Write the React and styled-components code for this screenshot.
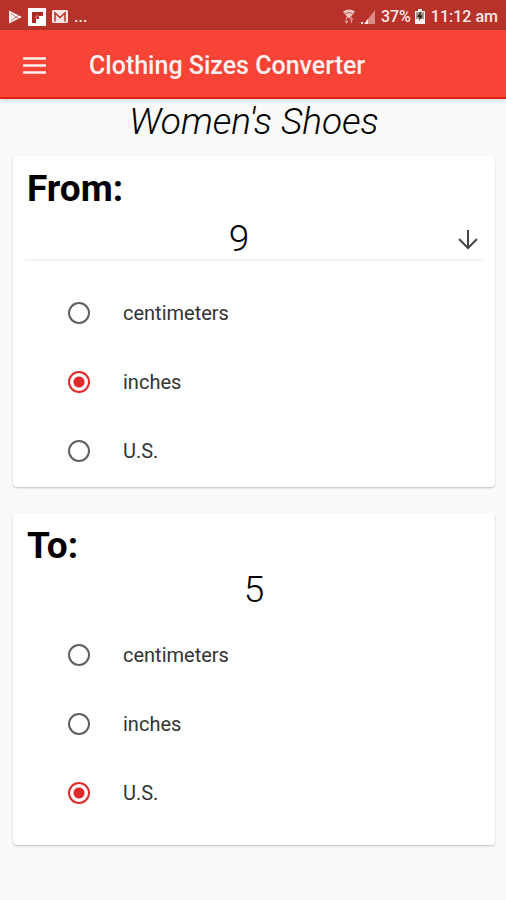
import React, { useState } from 'react'
import styled, { createGlobalStyle } from 'styled-components'

const GlobalStyle = createGlobalStyle`
    * {
        box-sizing: border-box;
    }
    body {
        margin: 0;
        background-color: #fafafa;
        color: #000;
        font-family: Roboto, sans-serif;
    }
`

// Status bar and app bar
const StatusBar = styled.div`
    display: flex;
    justify-content: space-between;
    align-items: center;
    height: 30px;
    padding: 3px 8px 0;
    background-color: #b7322a;
    color: #fde8e6;
    font-size: 16px;
    font-weight: 500;
    line-height: 27px;
`
const StatusGroup = styled.div`
    display: flex;
    align-items: center;
    gap: ${({ $gap }) => $gap}px;
    svg {
        display: block;
    }
`
const AppBar = styled.header`
    display: flex;
    align-items: center;
    gap: 40px;
    height: 69px;
    padding: 4px 20px 0;
    background-color: #f74436;
    border-bottom: 2px solid #df1f16;
    box-shadow: 0 1px 4px rgba(0, 40, 40, 0.22);
`
const MenuButton = styled.button`
    display: flex;
    padding: 3px;
    border: 0;
    background: none;
    color: #fff0ef;
    cursor: pointer;
`
const AppTitle = styled.h1`
    margin: 0;
    color: #fff3f2;
    font-size: 25px;
    font-weight: 500;
    line-height: 32px;
`

// Page content
const Content = styled.main`
    padding: 3px 11px 24px 13px;
`
const Category = styled.h2`
    margin: 0 0 14px;
    font-size: 37px;
    font-style: italic;
    font-weight: 300;
    line-height: 40px;
    text-align: center;
`
const Card = styled.section`
    padding: 13px 12px ${({ $bottom }) => $bottom}px;
    border-radius: 4px;
    background-color: #fff;
    box-shadow: 0 1px 2px rgba(0, 0, 0, 0.24);
    & + & {
        margin-top: 26px;
    }
`
const CardTitle = styled.h3`
    margin: 0;
    padding-left: 2px;
    font-size: 37px;
    font-weight: 700;
    line-height: 40px;
`
const SizeField = styled.label`
    display: flex;
    align-items: center;
    margin: 10px 0 17px;
    border-bottom: 2px solid #f3f3f3;
    svg {
        flex: none;
        margin: 0 3px;
    }
`
const SizeSelect = styled.select`
    flex: 1;
    height: 40px;
    padding: 0;
    border: 0;
    appearance: none;
    background: none;
    color: #000;
    font: 300 37px/40px Roboto, sans-serif;
    text-align-last: center;
`
const Result = styled.output`
    display: block;
    margin: 4px 0 10px;
    font-size: 37px;
    font-weight: 300;
    line-height: 40px;
    text-align: center;
`
const Units = styled.div`
    display: flex;
    flex-direction: column;
    padding-left: 43px;
`
const UnitLabel = styled.label`
    display: flex;
    align-items: center;
    gap: 33px;
    height: 69px;
    color: #333;
    font-size: 20px;
    line-height: 24px;
    cursor: pointer;
`
const Radio = styled.input`
    appearance: none;
    width: 22px;
    height: 22px;
    margin: 0;
    border: 2px solid #5f5f5f;
    border-radius: 50%;
    &:checked {
        border-color: #e02a2a;
        background: radial-gradient(circle, #e02a2a 5px, transparent 6px);
    }
`

const units = ['centimeters', 'inches', 'U.S.']
const sizes = ['5', '6', '7', '8', '9', '10', '11', '12']

function PlayIcon() {
    return (
        <svg width="14" height="14" viewBox="0 0 14 14">
            <path d="M1 0.5 14 7 1 13.5Z" fill="#fff0ef" />
            <path d="M3 3.5 8 7 3 10.5M8 7l3-2M8 7l3 2" fill="none" stroke="#d4766f" strokeWidth="1" />
        </svg>
    )
}

function FlipboardIcon() {
    return (
        <svg width="18" height="18" viewBox="0 0 18 18">
            <path d="M0 0h18v18H0Z" fill="#fff" />
            <path d="M4 4h11v4h-4v3H8v4H4Z" fill="#a82b24" />
            <path d="M8 8h3M8 8v3" stroke="#d98a85" strokeWidth="1" />
        </svg>
    )
}

function MailIcon() {
    return (
        <svg width="16" height="13" viewBox="0 0 16 13">
            <rect width="16" height="13" rx="1.5" fill="#fbe3e1" />
            <path d="M3 11.5V3l5 4.500L13 3v8.500" fill="none" stroke="#b7322a" strokeWidth="1.500" />
        </svg>
    )
}

function WifiIcon() {
    return (
        <svg width="12" height="15" viewBox="0 0 12 15">
            <path d="M0 2.500Q6-1.500 12 2.500L7 9H5Z" fill="#efc5c2" />
            <path d="M2.500 4.500q3.500-2 7 0" fill="none" stroke="#c4554d" strokeWidth="1" />
            <path d="M3.500 8v5M2 12l1.500 2L5 12M8.500 14V9M7 11l1.500-2 1.500 2" fill="none" stroke="#dc938e" strokeWidth="1.200" />
        </svg>
    )
}

function SignalIcon() {
    return (
        <svg width="14" height="14" viewBox="0 0 14 14">
            <path d="M14 0v14H3Z" fill="#dc8a85" />
            <path d="M7 9v5H3Z" fill="#fff0ef" />
            <path d="M0 12h2v2H0Z" fill="#fff0ef" />
        </svg>
    )
}

function BatteryIcon() {
    return (
        <svg width="10" height="15" viewBox="0 0 10 15">
            <path d="M3 0h4v2h3v13H0V2h3Z" fill="#fff0ef" />
            <path d="M1 3h8v7H1Z" fill="#a99a91" />
            <path d="M6 2 2 8h2.500L4 12l4-5.500H5.500Z" fill="#2d211d" />
        </svg>
    )
}

function MenuIcon() {
    return (
        <svg width="23" height="17" viewBox="0 0 23 17">
            <path d="M0 1.500h23M0 8.500h23M0 15.500h23" stroke="currentColor" strokeWidth="2.600" />
        </svg>
    )
}

function ArrowDownIcon() {
    return (
        <svg width="24" height="24" viewBox="0 0 24 24" fill="none" stroke="#444" strokeWidth="2">
            <path d="M12 3v18M3 12l9 9 9-9" />
        </svg>
    )
}

/**
 * Radio list of the available units
 */
function UnitList({ name, value, onChange }) {
    return (
        <Units role="radiogroup" aria-label={name}>
            {units.map((unit) => (
                <UnitLabel key={unit}>
                    <Radio
                        type="radio"
                        name={name}
                        checked={value === unit}
                        onChange={() => onChange(unit)}
                    />
                    {unit}
                </UnitLabel>
            ))}
        </Units>
    )
}

function App() {
    const [size, setSize] = useState('9')
    const [from, setFrom] = useState('inches')
    const [to, setTo] = useState('U.S.')

    return (
        <>
            <GlobalStyle />
            <StatusBar>
                <StatusGroup $gap={6}>
                    <PlayIcon />
                    <FlipboardIcon />
                    <MailIcon />
                    <span>...</span>
                </StatusGroup>
                <StatusGroup $gap={6}>
                    <WifiIcon />
                    <SignalIcon />
                    <StatusGroup $gap={4}>
                        <span>37%</span>
                        <BatteryIcon />
                    </StatusGroup>
                    <span>11:12 am</span>
                </StatusGroup>
            </StatusBar>
            <AppBar>
                <MenuButton type="button" aria-label="Menu">
                    <MenuIcon />
                </MenuButton>
                <AppTitle>Clothing Sizes Converter</AppTitle>
            </AppBar>
            <Content>
                <Category>Women's Shoes</Category>
                <Card $bottom={2}>
                    <CardTitle>From:</CardTitle>
                    <SizeField>
                        <SizeSelect
                            aria-label="Size"
                            value={size}
                            onChange={(e) => setSize(e.target.value)}
                        >
                            {sizes.map((s) => (
                                <option key={s}>{s}</option>
                            ))}
                        </SizeSelect>
                        <ArrowDownIcon />
                    </SizeField>
                    <UnitList name="from" value={from} onChange={setFrom} />
                </Card>
                <Card $bottom={18}>
                    <CardTitle>To:</CardTitle>
                    <Result>5</Result>
                    <UnitList name="to" value={to} onChange={setTo} />
                </Card>
            </Content>
        </>
    )
}

export default App
